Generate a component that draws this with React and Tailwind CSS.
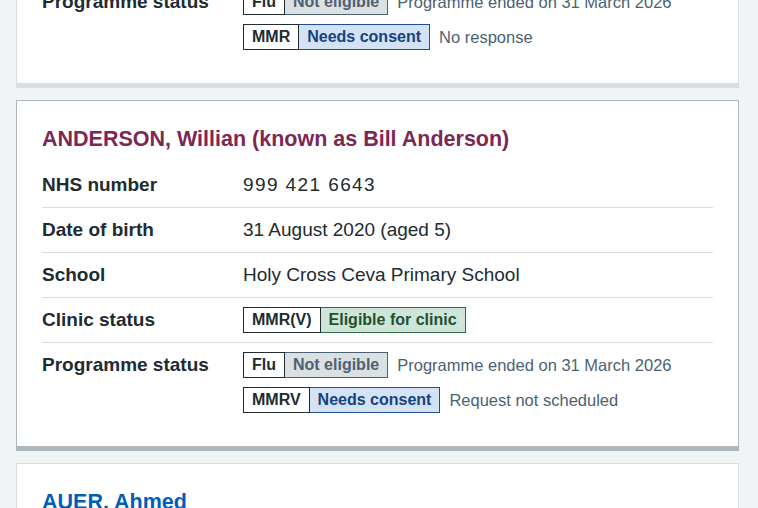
import React from 'react';

const tagColours = {
  grey: 'border-[#4c6272] bg-[#dbe0e3] text-[#4c6272]',
  blue: 'border-[#1d4f91] bg-[#d3e2f4] text-[#16427f]',
  green: 'border-[#2b6a43] bg-[#cfe5d8] text-[#1e5130]',
};

const Tag = ({ programme, status, colour }) => (
  <span className="inline-flex shrink-0 text-[16px] font-bold leading-[18px]">
    <span className="border border-[#212b32] bg-white px-[8px] py-[3px] text-[#212b32]">{programme}</span>
    <span className={`border border-l-0 px-[8px] py-[3px] ${tagColours[colour]}`}>{status}</span>
  </span>
);

const StatusLine = ({ programme, status, colour, note }) => (
  <div className="flex min-h-[28px] items-center gap-[9px]">
    <Tag programme={programme} status={status} colour={colour} />
    {note && <span className="text-[16.5px] leading-[28px] text-[#4c6272]">{note}</span>}
  </div>
);

const Row = ({ label, children, last }) => (
  <div className={`grid grid-cols-[201px_1fr] py-[8px] ${last ? '' : 'border-b border-[#d8dde0]'}`}>
    <dt className="text-[19px] font-bold leading-[28px]">{label}</dt>
    <dd className="text-[19px] leading-[28px]">{children}</dd>
  </div>
);

const PatientCard = ({ patient, active }) => (
  <div
    className={`mb-[16px] border bg-white px-[25px] pt-[24px] pb-[24px] ${
      active
        ? 'border-[#aeb7bd] shadow-[0_4px_0_#aeb7bd]'
        : 'border-[#d8dde0] shadow-[0_4px_0_#d8dde0]'
    }`}
  >
    <h2 className={`mb-[10px] text-[21.5px] font-bold leading-[28px] ${patient.visited ? 'text-[#7c2855]' : 'text-[#005eb8]'}`}>
      {patient.name}
    </h2>
    <dl>
      <Row label="NHS number">
        <span className="tracking-[1.4px]">{patient.nhs}</span>
      </Row>
      <Row label="Date of birth">{patient.dob}</Row>
      <Row label="School">{patient.school}</Row>
      <Row label="Clinic status">
        <div className="flex min-h-[28px] items-center">
          <Tag programme="MMR(V)" status="Eligible for clinic" colour="green" />
        </div>
      </Row>
      <Row label="Programme status" last>
        <div className="flex flex-col gap-[7px]">
          {patient.programmes.map((p) => (
            <StatusLine key={p.programme} {...p} />
          ))}
        </div>
      </Row>
    </dl>
  </div>
);

const patients = [
  {
    name: 'ALLEN, Harriet',
    nhs: '999 421 6617',
    dob: '14 May 2020 (aged 5)',
    school: 'Holy Cross Ceva Primary School',
    visited: true,
    programmes: [
      { programme: 'Flu', status: 'Not eligible', colour: 'grey', note: 'Programme ended on 31 March 2026' },
      { programme: 'MMR', status: 'Needs consent', colour: 'blue', note: 'No response' },
    ],
  },
  {
    name: 'ANDERSON, Willian (known as Bill Anderson)',
    nhs: '999 421 6643',
    dob: '31 August 2020 (aged 5)',
    school: 'Holy Cross Ceva Primary School',
    visited: true,
    active: true,
    programmes: [
      { programme: 'Flu', status: 'Not eligible', colour: 'grey', note: 'Programme ended on 31 March 2026' },
      { programme: 'MMRV', status: 'Needs consent', colour: 'blue', note: 'Request not scheduled' },
    ],
  },
  {
    name: 'AUER, Ahmed',
    nhs: '999 421 6651',
    dob: '2 February 2021 (aged 5)',
    school: 'Holy Cross Ceva Primary School',
    visited: false,
    programmes: [
      { programme: 'Flu', status: 'Not eligible', colour: 'grey', note: 'Programme ended on 31 March 2026' },
      { programme: 'MMRV', status: 'Needs consent', colour: 'blue', note: 'Request not scheduled' },
    ],
  },
];

export default function App() {
  return (
    <div className="h-[508px] overflow-hidden bg-[#f0f4f5] font-['Liberation_Sans',Arial,sans-serif] text-[#212b32]">
      <div className="-mt-[263px] px-[16px] pr-[19px]">
        {patients.map((p) => (
          <PatientCard key={p.nhs} patient={p} active={p.active} />
        ))}
      </div>
    </div>
  );
}
